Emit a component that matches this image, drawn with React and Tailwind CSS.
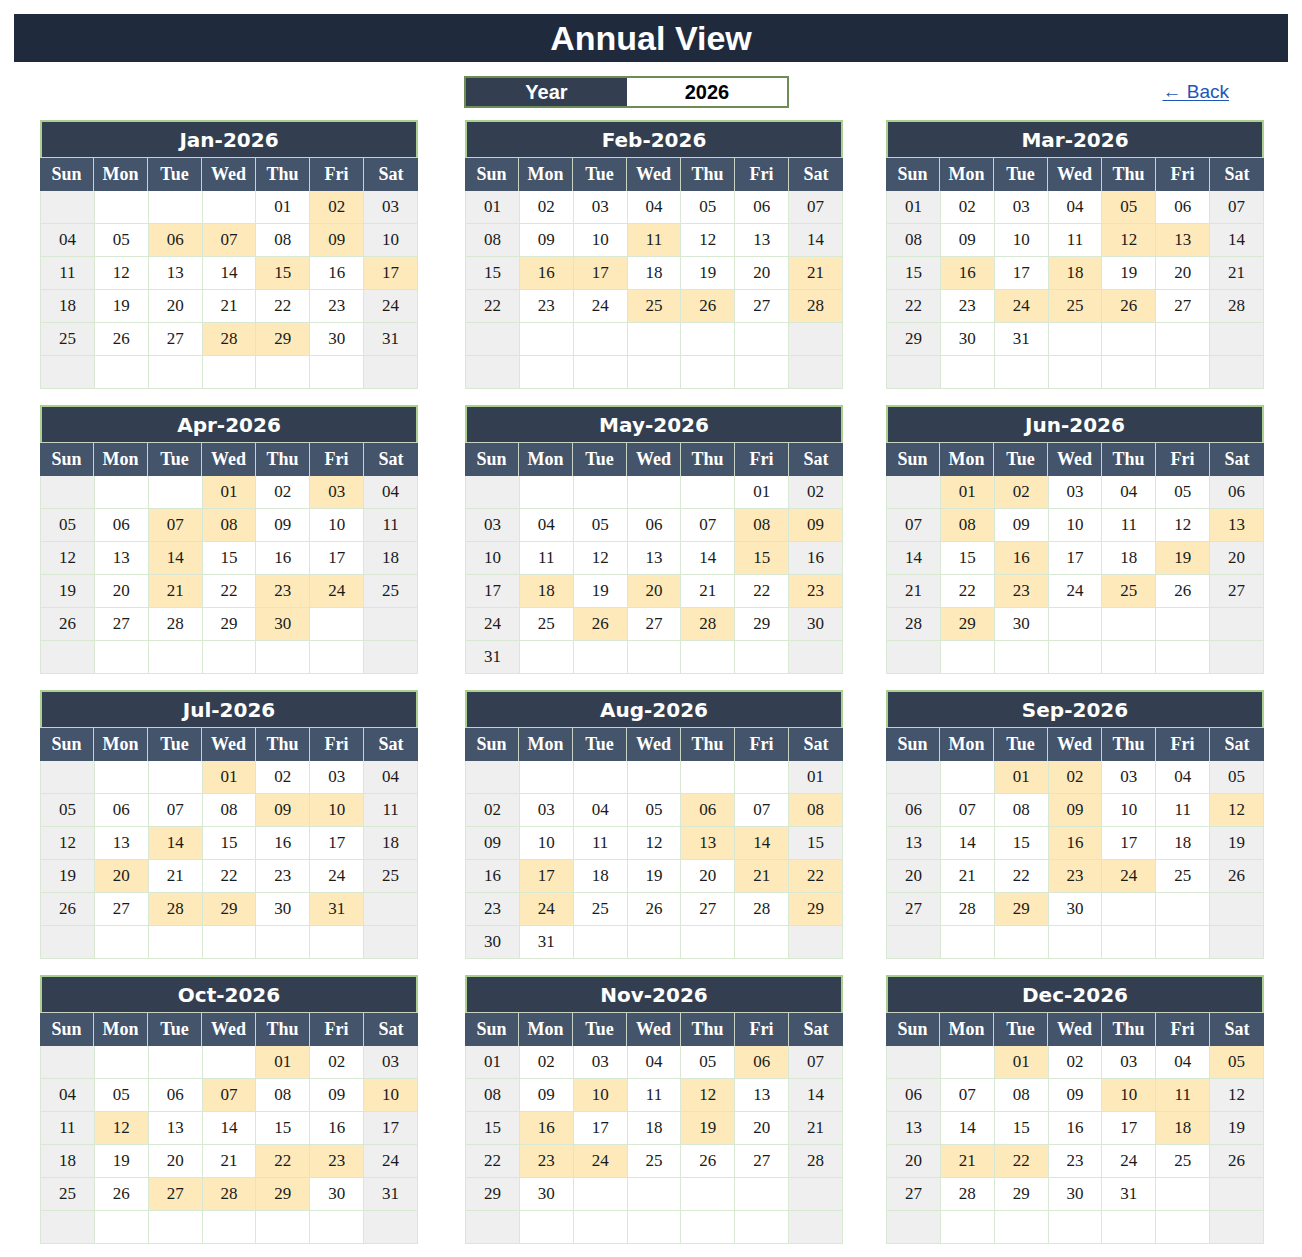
const YEAR = 2026;
const MONTHS = ["Jan", "Feb", "Mar", "Apr", "May", "Jun", "Jul", "Aug", "Sep", "Oct", "Nov", "Dec"];
const DAYS = ["Sun", "Mon", "Tue", "Wed", "Thu", "Fri", "Sat"];

// highlighted dates per month
const MARKED = [
  [2, 6, 7, 9, 15, 17, 28, 29],
  [11, 16, 17, 21, 25, 26, 28],
  [5, 12, 13, 16, 18, 24, 25, 26],
  [1, 3, 7, 8, 14, 21, 23, 24, 30],
  [8, 9, 15, 18, 20, 23, 26, 28],
  [1, 2, 8, 13, 16, 19, 23, 25, 29],
  [1, 9, 10, 14, 20, 28, 29, 31],
  [6, 8, 13, 14, 17, 21, 22, 24, 29],
  [1, 2, 9, 12, 16, 23, 24, 29],
  [1, 7, 10, 12, 22, 23, 27, 28, 29],
  [6, 10, 12, 16, 19, 23, 24],
  [1, 5, 10, 11, 18, 21, 22],
];

function buildCells(m) {
  const first = new Date(YEAR, m, 1).getDay();
  const count = new Date(YEAR, m + 1, 0).getDate();
  const cells = [];
  for (let i = 0; i < 42; i++) {
    const d = i - first + 1;
    cells.push(d >= 1 && d <= count ? d : null);
  }
  return cells;
}

function MonthCard({ m }) {
  const cells = buildCells(m);
  const marked = MARKED[m];
  return (
    <div className="w-[378px]">
      <div className="flex h-[37px] items-center justify-center border-2 border-b-0 border-[#a9d08e] bg-[#333f50] font-['DejaVu_Sans',sans-serif] text-[20px] font-bold text-white">
        {MONTHS[m]}-{YEAR}
      </div>
      <div className="grid grid-cols-7 border-t border-[#c9d3c3] bg-[#44546a]">
        {DAYS.map((d, i) => (
          <div
            key={d}
            className={
              "flex h-[33px] items-center justify-center font-['Liberation_Serif',serif] text-[18px] font-bold text-white " +
              (i < 6 ? "border-r border-[#c9d3c3]" : "")
            }
          >
            {d}
          </div>
        ))}
      </div>
      <div className="grid grid-cols-7 border-l border-[#d9e8d2]">
        {cells.map((d, i) => {
          const col = i % 7;
          const hot = d && marked.includes(d);
          const weekend = col === 0 || col === 6;
          const bg = hot ? "bg-[#fde9b9]" : weekend ? "bg-[#efefef]" : "bg-white";
          return (
            <div
              key={i}
              className={
                "flex h-[33px] items-center justify-center border-r border-b border-[#d9e8d2] font-['Liberation_Serif',serif] text-[17px] text-[#1a1a1a] " +
                bg
              }
            >
              {d ? String(d).padStart(2, "0") : ""}
            </div>
          );
        })}
      </div>
    </div>
  );
}

export default function App() {
  return (
    <div className="min-h-[1257px] w-[1302px] bg-white pt-[14px]">
      <div className="mx-[14px] flex h-[48px] items-center justify-center bg-[#1f2a3d] font-['Liberation_Sans',Arial,sans-serif] text-[34px] font-bold text-white">
        Annual View
      </div>

      <div className="mt-[14px] grid grid-cols-[425px_421px_378px] pl-[40px]">
        <div />
        <div className="-ml-px flex h-[32px] w-[325px] border-2 border-[#6e8c55] font-['Liberation_Sans',Arial,sans-serif] text-[20px] font-bold">
          <div className="flex w-[161px] items-center justify-center bg-[#333f50] text-white">Year</div>
          <div className="flex flex-1 items-center justify-center bg-white text-black">{YEAR}</div>
        </div>
        <div className="flex items-center justify-end pr-[35px]">
          <a href="#" className="font-['Liberation_Sans',Arial,sans-serif] text-[19px] text-[#1e56b8] underline underline-offset-2">
            ← Back
          </a>
        </div>
      </div>

      <div className="mt-[12px] grid grid-cols-[425px_421px_378px] gap-y-[16px] pl-[40px]">
        {MONTHS.map((_, m) => (
          <MonthCard key={m} m={m} />
        ))}
      </div>
    </div>
  );
}
